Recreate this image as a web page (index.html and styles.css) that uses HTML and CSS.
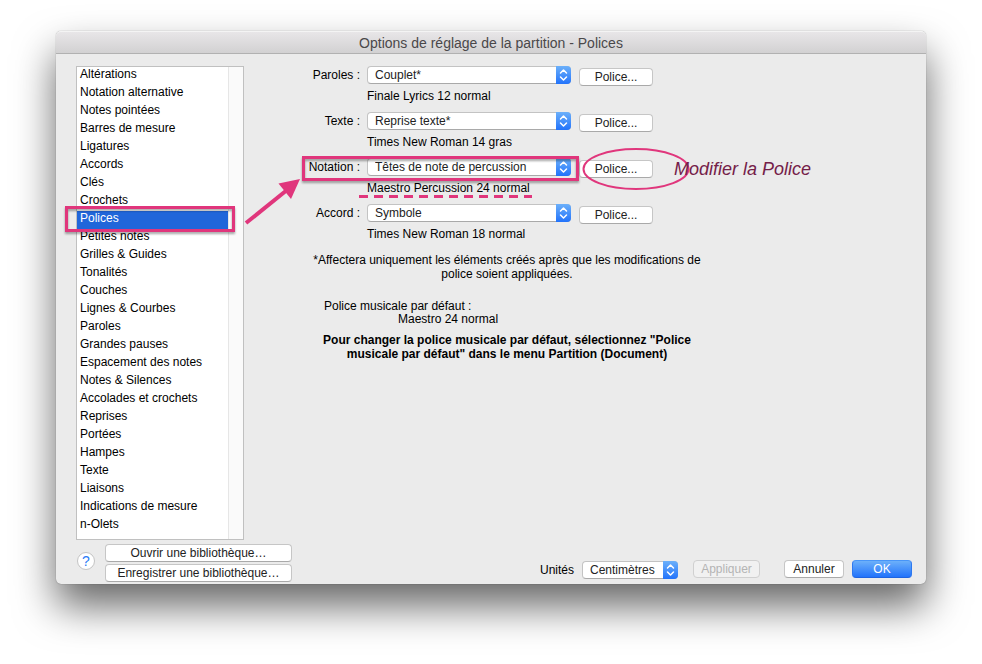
FILE: index.html
```html
<!DOCTYPE html>
<html lang="fr">
<head>
<meta charset="utf-8">
<title>Options de réglage de la partition - Polices</title>
<link rel="stylesheet" href="styles.css">
</head>
<body>
<svg class="symbols" width="0" height="0" aria-hidden="true">
  <symbol id="stepper" viewBox="0 0 15 18">
    <path d="M4.500 7 7.500 4l3 3M4.500 11l3 3 3-3" fill="none" stroke="#fff" stroke-width="1.500" stroke-linecap="round" stroke-linejoin="round"/>
  </symbol>
</svg>
<div class="window">
  <header class="titlebar"><h1>Options de réglage de la partition - Polices</h1></header>
  <div class="content">
    <div class="panes">
      <nav class="list" aria-label="Catégories">
        <ul>
          <li><a href="#">Altérations</a></li>
          <li><a href="#">Notation alternative</a></li>
          <li><a href="#">Notes pointées</a></li>
          <li><a href="#">Barres de mesure</a></li>
          <li><a href="#">Ligatures</a></li>
          <li><a href="#">Accords</a></li>
          <li><a href="#">Clés</a></li>
          <li><a href="#">Crochets</a></li>
          <li><a href="#" class="selected" aria-current="true">Polices</a></li>
          <li><a href="#">Petites notes</a></li>
          <li><a href="#">Grilles &amp; Guides</a></li>
          <li><a href="#">Tonalités</a></li>
          <li><a href="#">Couches</a></li>
          <li><a href="#">Lignes &amp; Courbes</a></li>
          <li><a href="#">Paroles</a></li>
          <li><a href="#">Grandes pauses</a></li>
          <li><a href="#">Espacement des notes</a></li>
          <li><a href="#">Notes &amp; Silences</a></li>
          <li><a href="#">Accolades et crochets</a></li>
          <li><a href="#">Reprises</a></li>
          <li><a href="#">Portées</a></li>
          <li><a href="#">Hampes</a></li>
          <li><a href="#">Texte</a></li>
          <li><a href="#">Liaisons</a></li>
          <li><a href="#">Indications de mesure</a></li>
          <li><a href="#">n-Olets</a></li>
        </ul>
        <div class="track"></div>
      </nav>
      <main class="settings">
        <div class="row">
          <label for="paroles">Paroles :</label>
          <span class="popup"><select id="paroles"><option>Couplet*</option></select><svg><use href="#stepper"/></svg></span>
          <button type="button" class="btn">Police...</button>
          <p>Finale Lyrics 12 normal</p>
        </div>
        <div class="row">
          <label for="texte">Texte :</label>
          <span class="popup"><select id="texte"><option>Reprise texte*</option></select><svg><use href="#stepper"/></svg></span>
          <button type="button" class="btn">Police...</button>
          <p>Times New Roman 14 gras</p>
        </div>
        <div class="row">
          <label for="notation">Notation :</label>
          <span class="popup"><select id="notation"><option>Têtes de note de percussion</option></select><svg><use href="#stepper"/></svg></span>
          <button type="button" class="btn">Police...</button>
          <p>Maestro Percussion 24 normal</p>
        </div>
        <div class="row">
          <label for="accord">Accord :</label>
          <span class="popup"><select id="accord"><option>Symbole</option></select><svg><use href="#stepper"/></svg></span>
          <button type="button" class="btn">Police...</button>
          <p>Times New Roman 18 normal</p>
        </div>
        <div class="notes">
          <p class="centered">*Affectera uniquement les éléments créés après que les modifications de police soient appliquées.</p>
          <dl>
            <dt>Police musicale par défaut :</dt>
            <dd>Maestro 24 normal</dd>
          </dl>
          <p class="centered strong">Pour changer la police musicale par défaut, sélectionnez "Police musicale par défaut" dans le menu Partition (Document)</p>
        </div>
      </main>
    </div>
    <footer class="footer">
      <button type="button" class="help" aria-label="Aide">?</button>
      <div class="library">
        <button type="button" class="btn">Ouvrir une bibliothèque…</button>
        <button type="button" class="btn">Enregistrer une bibliothèque…</button>
      </div>
      <div class="actions">
        <label for="unites">Unités</label>
        <span class="popup units"><select id="unites"><option>Centimètres</option></select><svg><use href="#stepper"/></svg></span>
        <button type="button" class="btn apply" disabled>Appliquer</button>
        <button type="button" class="btn cancel">Annuler</button>
        <button type="button" class="btn primary">OK</button>
      </div>
    </footer>
  </div>
  <svg class="marks" viewBox="0 0 870 553" aria-hidden="true">
    <g fill="none" stroke="#e0367c">
      <rect class="frame" x="10.500" y="176.500" width="167" height="23" stroke-width="3"/>
      <rect class="frame" x="247.500" y="126.500" width="274" height="22" stroke-width="3"/>
      <ellipse cx="580" cy="138" rx="52.500" ry="20" stroke-width="2"/>
      <path d="M303 165.500H476" stroke-width="3" stroke-dasharray="9 6"/>
      <path d="M190 192 231 159" stroke-width="4"/>
    </g>
    <path d="M244 148 222.500 152.500 235 168Z" fill="#e0367c"/>
  </svg>
  <p class="callout">Modifier la Police</p>
</div>
</body>
</html>
```

FILE: styles.css
```css
* { box-sizing: border-box; }

body {
  margin: 0;
  padding: 31px 56px 80px;
  background: #fff;
  color: #000;
  font: 12px/16px "Liberation Sans", Arial, sans-serif;
}

h1, p, ul, dl, dd { margin: 0; padding: 0; }
ul { list-style: none; }
.symbols { position: absolute; }

.window {
  position: relative;
  background: #ebebeb;
  border-radius: 5px;
  box-shadow: 0 0 1px rgba(0, 0, 0, .5), 0 22px 40px rgba(0, 0, 0, .6);
}

.titlebar {
  height: 23px;
  border-top: 1px solid #f4f4f4;
  border-bottom: 1px solid #b1b1b1;
  border-radius: 5px 5px 0 0;
  background: linear-gradient(#e8e6e8, #d2d1d2);
  text-align: center;
}
.titlebar h1 {
  color: #4a484a;
  font-size: 14px;
  font-weight: normal;
  line-height: 22px;
}

.content { padding: 12px 14px 2px 20px; }
.panes { display: flex; }

.list {
  display: flex;
  flex: none;
  width: 168px;
  border: 1px solid #c0c0c0;
  background: #fff;
}
.list ul { flex: 1; padding-bottom: 4px; }
.list a {
  display: block;
  height: 18px;
  padding-left: 3px;
  color: #000;
  line-height: 14px;
  text-decoration: none;
}
.list .selected { background: #2066da; color: #fff; }
.track {
  width: 15px;
  border-left: 1px solid #e6e6e6;
  background: #fafafa;
}

.settings { flex: 1; min-width: 0; }
.row {
  display: grid;
  grid-template-columns: 116px 205px 74px;
  grid-template-rows: 22px 24px;
  column-gap: 7px;
}
.row label { line-height: 18px; text-align: right; }
.row p { grid-column: 2 / 4; }
.row .btn { margin-top: 2px; }

.popup { position: relative; display: block; width: 204px; height: 18px; }
.popup select {
  appearance: none;
  display: block;
  width: 100%;
  height: 18px;
  margin: 0;
  padding: 0 18px 0 7px;
  border: 1px solid #c3c3c3;
  border-bottom-color: #a9a9a9;
  border-radius: 4px;
  background: #fff;
  color: #222;
  font: inherit;
}
.popup svg {
  position: absolute;
  top: 0;
  right: 0;
  width: 15px;
  height: 18px;
  border-radius: 0 4px 4px 0;
  background: linear-gradient(#6cb0fa, #2273fb);
  pointer-events: none;
}

.btn {
  height: 18px;
  margin: 0;
  padding: 0;
  border: 1px solid #c6c6c6;
  border-bottom-color: #a9a9a9;
  border-radius: 4px;
  background: #fff;
  color: #222;
  font: inherit;
}

.notes { width: 400px; margin: 3px 0 0 63px; line-height: 14px; }
.notes .centered { text-align: center; }
.notes dl { margin: 19px 0 7px 17px; line-height: 13px; }
.notes dd { margin-left: 74px; }
.strong { font-weight: bold; }

.footer { display: flex; align-items: flex-start; margin-top: 4px; }
.help {
  width: 18px;
  height: 18px;
  margin: 8px 10px 0 1px;
  padding: 0;
  border: 1px solid #c4c4c4;
  border-radius: 50%;
  background: #fff;
  color: #2b7cf6;
  font: 14px/16px "Liberation Sans", Arial, sans-serif;
}
.library { display: grid; gap: 2px; width: 187px; }
.actions { display: flex; gap: 8px; margin: 16px 0 0 auto; }
.actions label { line-height: 20px; }
.units { width: 96px; margin-top: 1px; }
.apply { width: 67px; margin: 0 16px 0 7px; }
.cancel, .primary { width: 60px; }
.apply:disabled { border-color: #d0d0d0; background: #f1f1f1; color: #b4b4b4; }
.primary {
  border-color: #4795f8 #2d78f0 #1f64e0;
  background: linear-gradient(#6cb0fa, #2273fb);
  color: #fff;
}

/* Annotations laid over the dialog */
.marks {
  position: absolute;
  top: 0;
  left: 0;
  width: 870px;
  height: 553px;
  overflow: visible;
  pointer-events: none;
}
.frame { filter: drop-shadow(0 2px 1px rgba(0, 0, 0, .35)); }
.callout {
  position: absolute;
  top: 128px;
  left: 618px;
  color: #742048;
  font-size: 18px;
  font-style: italic;
  line-height: 20px;
}
```
